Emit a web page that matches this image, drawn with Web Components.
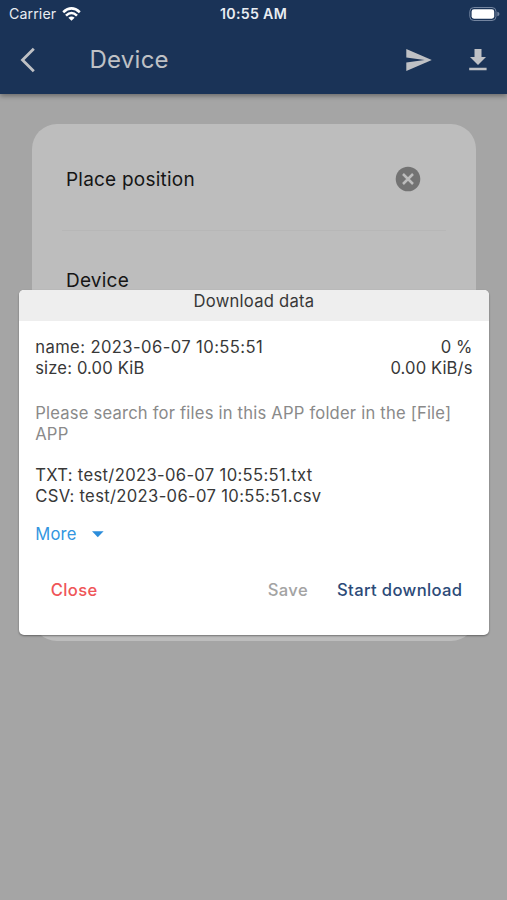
<!DOCTYPE html>
<html lang="en">
<head>
<meta charset="utf-8">
<title>Device</title>
<style>
html,body{margin:0;height:100%}
body{font-family:Inter,"Liberation Sans",sans-serif;background:#a5a5a5;overflow:hidden}
</style>
</head>
<body>
<device-screen></device-screen>
<script>
const define = (name, html) => customElements.define(name, class extends HTMLElement {
  constructor() {
    super();
    this.attachShadow({mode: 'open'}).innerHTML = html;
  }
});

define('status-bar', `
<style>
:host{display:grid;grid-template-columns:1fr auto 1fr;align-items:center;height:27px;color:#e9edf2;padding:0 7px 0 9px;box-sizing:border-box}
.left{display:flex;align-items:center;gap:6px;font-size:14.2px;letter-spacing:.1px}
.time{font-size:14.2px;font-weight:600;letter-spacing:.3px;margin-right:2px}
svg{display:block}
.bat{justify-self:end}
</style>
<div class="left"><span>Carrier</span>
<svg width="19" height="14" viewBox="0 0 19 14" fill="none" stroke="#fff" stroke-width="2.6"><path d="M1.2 5.2Q9.5-2.4 17.8 5.2"/><path d="M4 8.6Q9.5 3.4 15 8.6"/><path d="M9.5 13.8L6.4 10.7Q9.5 8.1 12.6 10.7Z" fill="#fff" stroke="none"/></svg></div>
<span class="time">10:55 AM</span>
<svg class="bat" width="31" height="14" viewBox="0 0 31 14"><rect x=".8" y=".5" width="26.2" height="13" rx="4" fill="none" stroke="#7485a0"/><rect x="2.6" y="2.3" width="22.6" height="9.4" rx="2.4" fill="#fff"/><path d="M28.3 4.7Q30.5 5.3 30.5 7T28.3 9.3Z" fill="#7485a0"/></svg>`);

define('app-bar', `
<style>
:host{display:flex;flex-direction:column;height:94px;background:#1a3357;box-shadow:0 2px 5px rgba(0,0,0,.36);position:relative;flex:none}
.row{display:flex;align-items:center;height:65px;padding:0 20px 0 20px}
h1{margin:0 auto 0 53.5px;font-size:24px;line-height:30px;font-weight:400;color:#bfc1c5;letter-spacing:.25px}
svg{display:block}
.send{margin-right:37px}
</style>
<status-bar></status-bar>
<div class="row">
<svg width="16" height="26" viewBox="0 0 16 26"><path d="M13.8 1.7L2.5 13L13.8 24.3" fill="none" stroke="#bfc1c5" stroke-width="2.8"/></svg>
<h1>Device</h1>
<svg class="send" width="26" height="22" viewBox="0 0 26 22"><path d="M.3 0L25.8 11L.3 22V13.4L18.6 11L.3 8.6Z" fill="#bfc1c5"/></svg>
<svg width="18" height="22" viewBox="0 0 18 22"><path d="M5.5 0H12.5V8.1H17L9 16L1 8.1H5.5ZM.2 18.8H17.6V21.3H.2Z" fill="#bfc1c5"/></svg>
</div>`);

define('settings-card', `
<style>
:host{display:flex;flex-direction:column;margin:30.4px 31px 0 31.6px;height:516.4px;border-radius:25px;background:#bdbdbd;padding:0 30px;box-sizing:border-box;color:#151515;font-size:19px;letter-spacing:.22px}
.row{display:flex;align-items:center;justify-content:space-between;height:106.6px;padding:4.4px 25px 0 4.4px;box-sizing:border-box;border-bottom:1px solid #b7b7b7}
.row:last-child{border:0;height:95px}
</style>
<div class="row"><span>Place position</span>
<svg width="26" height="26" viewBox="0 0 26 26"><circle cx="13" cy="13" r="12.3" fill="#737373"/><path d="M8 8L18 18M18 8L8 18" stroke="#bdbdbd" stroke-width="2.5"/></svg></div>
<div class="row"><span>Device</span></div>`);

define('flat-button', `
<style>
:host{display:block;font-size:16.6px;line-height:21px;font-weight:500;letter-spacing:.36px;white-space:nowrap}
</style><slot></slot>`);

define('download-dialog', `
<style>
:host{display:block;position:absolute;left:19px;top:290px;width:470px;height:345px;box-sizing:border-box;background:#fff;border-radius:5px;overflow:hidden;box-shadow:0 1px 2px rgba(0,0,0,.4);color:#383838;font-size:16.6px;line-height:21px;letter-spacing:.2px}
.head{height:31px;padding-top:1px;box-sizing:border-box;background:#eee;text-align:center;letter-spacing:.25px}
.body{padding:16px 16.5px 0 16.2px}
.pair{display:flex;justify-content:space-between}
.pair .a{letter-spacing:.41px}
.size{letter-spacing:.15px}
.num{letter-spacing:.1px}
.hint{margin-top:24px;color:#8a8a8a;white-space:nowrap}
.paths{margin-top:20px;letter-spacing:.34px}
.more{display:flex;align-items:center;gap:15px;margin-top:17px;color:#3396e0}
.actions{display:flex;margin-top:35px;padding:0 10px 0 15.5px}
.close{color:#ef5558;margin-right:auto}
.save{color:#a3a3a3;margin-right:29px}
.start{color:#2c4a78}
</style>
<div class="head">Download data</div>
<div class="body">
<div class="pair"><span class="a">name: 2023-06-07 10:55:51</span><span class="num">0 %</span></div>
<div class="pair"><span class="size">size: 0.00 KiB</span><span class="num">0.00 KiB/s</span></div>
<div class="hint">Please search for files in this APP folder in the [File]<br>APP</div>
<div class="paths">TXT: test/2023-06-07 10:55:51.txt<br>CSV: test/2023-06-07 10:55:51.csv</div>
<div class="more"><span>More</span><svg width="12" height="7" viewBox="0 0 12 7"><path d="M0 .3H11.6L5.8 6.3Z" fill="#2b8ddb"/></svg></div>
<div class="actions"><flat-button class="close">Close</flat-button><flat-button class="save">Save</flat-button><flat-button class="start">Start download</flat-button></div>
</div>`);

define('device-screen', `
<style>
:host{display:flex;flex-direction:column;position:relative;width:507px;height:900px;background:#a5a5a5;overflow:hidden}
</style>
<app-bar></app-bar>
<settings-card></settings-card>
<download-dialog></download-dialog>`);
</script>
</body>
</html>
